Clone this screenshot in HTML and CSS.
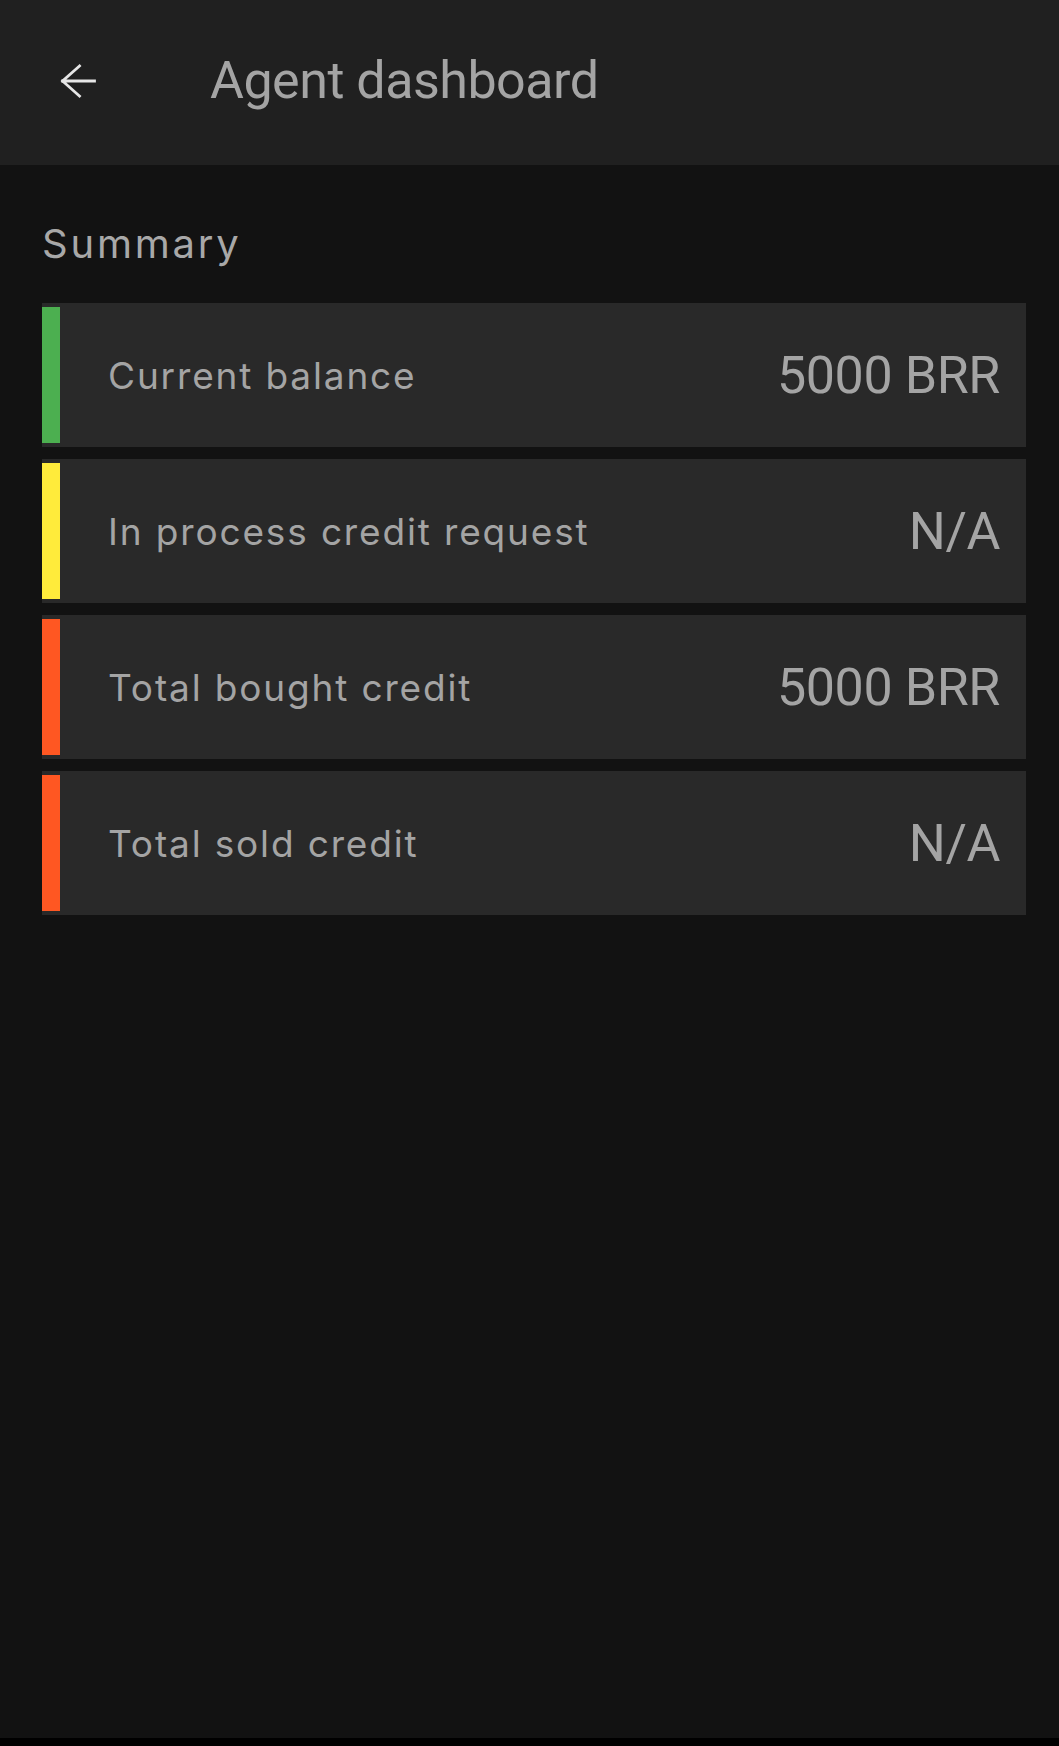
FILE: index.html
```html
<!DOCTYPE html>
<html>
<head>
<meta charset="utf-8">
<link rel="stylesheet" href="styles.css">
</head>
<body>
<div class="screen">
  <header class="appbar">
    <svg class="back" width="36" height="36" viewBox="0 0 36 36">
      <path d="M2.5 17 L34.5 17 M2.5 17 L19.5 2 M2.5 17 L19.5 32" fill="none" stroke="#e6e6e6" stroke-width="2.8" stroke-linecap="square"/>
    </svg>
    <div class="title">Agent dashboard</div>
  </header>
  <main class="content">
    <div class="section-title">Summary</div>
    <div class="cards">
      <div class="card">
        <div class="bar green"></div>
        <div class="label">Current balance</div>
        <div class="value">5000 BRR</div>
      </div>
      <div class="card">
        <div class="bar yellow"></div>
        <div class="label">In process credit request</div>
        <div class="value">N/A</div>
      </div>
      <div class="card">
        <div class="bar orange"></div>
        <div class="label">Total bought credit</div>
        <div class="value">5000 BRR</div>
      </div>
      <div class="card">
        <div class="bar orange"></div>
        <div class="label">Total sold credit</div>
        <div class="value">N/A</div>
      </div>
    </div>
  </main>
  <div class="navstrip"></div>
</div>
</body>
</html>
```

FILE: styles.css
```css
html, body {
  margin: 0;
  padding: 0;
  background: #121212;
}
.screen {
  width: 1059px;
  height: 1746px;
  display: flex;
  flex-direction: column;
  background: #121212;
  overflow: hidden;
}
.appbar {
  height: 165px;
  flex: none;
  background: #202020;
  display: flex;
  align-items: center;
  box-sizing: border-box;
  padding-bottom: 2px;
}
.back {
  margin-left: 60px;
  flex: none;
}
.title {
  margin-left: 114px;
  font-family: Roboto, "Liberation Sans", sans-serif;
  font-size: 52px;
  color: #a4a4a4;
  line-height: 1.17;
  letter-spacing: -0.5px;
}
.content {
  flex: 1;
  padding: 59px 33px 0 42px;
}
.section-title {
  font-family: Inter, "Open Sans", sans-serif;
  font-size: 40px;
  line-height: 1;
  color: #a8a8a8;
  letter-spacing: 2.8px;
}
.cards {
  margin-top: 39px;
  display: flex;
  flex-direction: column;
  gap: 12px;
}
.card {
  height: 144px;
  background: #292929;
  display: flex;
  align-items: center;
}
.bar {
  width: 18px;
  align-self: stretch;
  margin: 4px 0;
  flex: none;
}
.green { background: #4caf50; }
.yellow { background: #ffeb3b; }
.orange { background: #ff5722; }
.label {
  margin-left: 48px;
  font-family: Inter, "Open Sans", sans-serif;
  font-size: 37px;
  color: #a4a4a4;
  letter-spacing: 1.85px;
}
.value {
  margin-left: auto;
  padding-right: 26px;
  font-family: Roboto, "Liberation Sans", sans-serif;
  font-size: 52px;
  color: #a4a4a4;
  letter-spacing: -0.4px;
}
.navstrip {
  height: 8px;
  flex: none;
  background: #000;
}
```
